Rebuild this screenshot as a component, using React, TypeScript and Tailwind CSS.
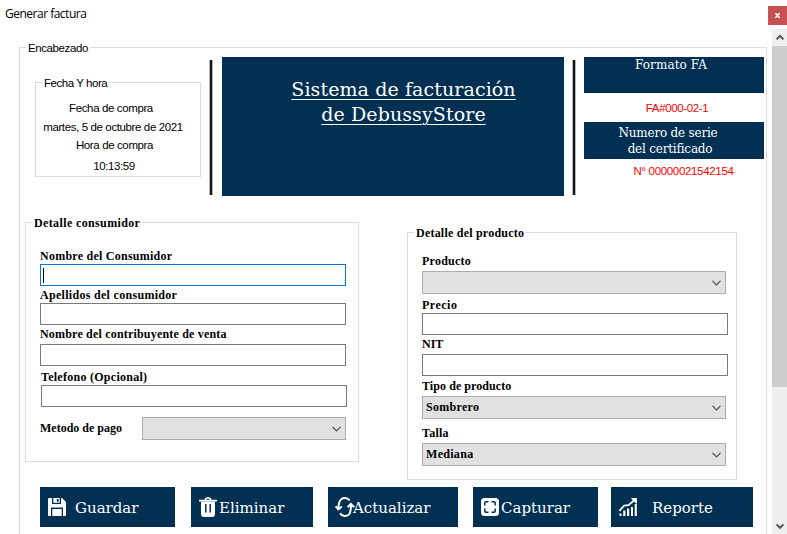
import type { ReactNode } from "react";

const sans = "font-['Liberation_Sans',Arial,sans-serif]";
const serif = "font-['Liberation_Serif','Times_New_Roman',serif]";
const display = "font-['DejaVu_Serif',serif]";

function GroupBox({ title, className, legendClass, children }: { title: string; className: string; legendClass: string; children: ReactNode }) {
  return (
    <fieldset className={`shrink-0 min-w-0 border border-[#dcdcdc] ${className}`}>
      <legend className={`ml-[6px] h-[13px] whitespace-nowrap pl-[2px] leading-[15px] ${legendClass}`}>{title}</legend>
      {children}
    </fieldset>
  );
}

function Label({ className, children }: { className: string; children: ReactNode }) {
  return <div className={`h-[15px] whitespace-nowrap leading-[15px] ${className}`}>{children}</div>;
}

function TextBox({ className = "", focused = false }: { className?: string; focused?: boolean }) {
  return (
    <div className={`flex h-[22px] w-[306px] items-center border bg-white pl-[2px] ${focused ? "border-[#0078d7]" : "border-[#7a7a7a]"} ${className}`}>
      {focused && <span className="h-[15px] w-px bg-black" />}
    </div>
  );
}

function Combo({ className, value = "" }: { className: string; value?: string }) {
  return (
    <div className={`flex h-[23px] items-center justify-between border border-[#adadad] bg-[#e1e1e1] pl-[3px] pr-[4px] ${className}`}>
      <span className="leading-[15px] tracking-[0.3px]">{value}</span>
      <svg width="9" height="6" viewBox="0 0 9 6" fill="none" stroke="#4d4d4d" strokeWidth="1.2">
        <path d="M0.5 0.8 4.5 4.8 8.5 0.8" />
      </svg>
    </div>
  );
}

function Divider({ className }: { className: string }) {
  return <div className={`h-[135px] w-[4px] border-x border-l-[#b8b8b8] border-r-[#b8b8b8] bg-[#141414] ${className}`} />;
}

function ActionButton({ className, icon, label, labelClass }: { className: string; icon: ReactNode; label: string; labelClass: string }) {
  return (
    <div className={`flex h-10 shrink-0 items-center bg-[#023052] text-white ${className}`}>
      {icon}
      <span className={`whitespace-nowrap pt-px text-[15px] leading-5 ${labelClass}`}>{label}</span>
    </div>
  );
}

const SaveIcon = () => (
  <svg className="shrink-0" width="18" height="18" viewBox="0 0 18 18" fill="#fff">
    <path d="M1 0H4V6H13V0H14L18 4V17Q18 18 17 18H15V9.5H3V18H1Q0 18 0 17V1Q0 0 1 0Z" />
    <path d="M5.3 0H11.7V4.8H5.3Z" />
    <path d="M8.8 1H10.6V3.8H8.8Z" fill="#023052" />
    <path d="M4.3 11H13.7V18H4.3Z" />
  </svg>
);

const TrashIcon = () => (
  <svg className="shrink-0" width="18" height="20" viewBox="0 0 18 20" fill="#fff">
    <path d="M0 2.7H5.5Q6 0 9 0T12.5 2.7H18V4.6H0ZM7.2 2.7H10.8Q10.4 1.5 9 1.5T7.2 2.7Z" fillRule="evenodd" />
    <path d="M2 4.4H16V17Q16 20 13 20H5Q2 20 2 17ZM6 7V15.6H7.5V7ZM10.5 7V15.6H12V7Z" fillRule="evenodd" />
  </svg>
);

const RefreshIcon = () => (
  <svg className="shrink-0" width="20" height="20" viewBox="0 0 20 20" fill="none" stroke="#fff" strokeWidth="2">
    <path d="M14.6 3.4C12 0.2 8 0.3 5.8 2.6C3.6 4.8 3.4 7 3.4 12" />
    <path d="M0.6 9.3 3.4 12.4 6.8 9.6" />
    <path d="M5 16.3C7.4 19.7 11.8 19.7 14 17.4C16 15.2 16 13 16 7.5" />
    <path d="M12.6 10.2 15.9 7 19.2 10.2" />
  </svg>
);

const CaptureIcon = () => (
  <svg className="shrink-0" width="18" height="18" viewBox="0 0 18 18">
    <rect width="18" height="18" rx="3.5" fill="#fff" />
    <path d="M3.8 7.5V5Q3.8 3.8 5 3.8H7.5M10.5 3.8H13Q14.2 3.8 14.2 5V7.5M14.2 10.5V13Q14.2 14.2 13 14.2H10.5M7.5 14.2H5Q3.8 14.2 3.8 13V10.5" fill="none" stroke="#023052" strokeWidth="1.5" />
  </svg>
);

const ReportIcon = () => (
  <svg className="shrink-0" width="18" height="18" viewBox="0 0 18 18" fill="#fff">
    <path d="M0.5 15.5H2.5V18H0.5ZM4.2 12.5H6.4V18H4.2ZM8 10.5H10.2V18H8ZM12 9H14V18H12ZM15.7 6H17.8V18H15.7Z" />
    <path d="M0.3 13 5.2 7.5 9.5 7.2 15.8 1.8" fill="none" stroke="#fff" strokeWidth="1.8" />
    <path d="M12 0H18V6L16 4.5 13.5 2Z" />
  </svg>
);

function ScrollArrow({ up = false }: { up?: boolean }) {
  return (
    <svg width="8" height="7" viewBox="0 0 8 7" fill="none" stroke="#555" strokeWidth="2">
      <path d={up ? "M0.6 5.3 4 1.9 7.4 5.3" : "M0.6 1.4 4 4.8 7.4 1.4"} />
    </svg>
  );
}

export default function App() {
  return (
    <div className={`flex h-[534px] w-[787px] flex-col overflow-hidden bg-white text-black ${sans}`}>
      <header className="flex h-[29px] shrink-0 items-start justify-between">
        <h1 className="ml-[5px] mt-[6px] whitespace-nowrap font-['Open_Sans',sans-serif] text-[12px] leading-4 tracking-[-0.5px]">Generar factura</h1>
        <button className="mt-[6px] flex h-[19px] w-[19px] items-center justify-center bg-[#c75050]">
          <svg width="5" height="5" viewBox="0 0 5 5" stroke="#fff" strokeWidth="1.6"><path d="M0.3 0 4.7 5M4.7 0 0.3 5" /></svg>
        </button>
      </header>

      <div className="flex min-h-0 flex-1">
        <main className="w-[772px] pl-[19px] pt-[12px]">
          <GroupBox title="Encabezado" className="h-[520px] w-[748px]" legendClass="w-[64px] text-[11.5px] tracking-[-0.4px]">
            <section className="flex h-[162px] items-start text-[11.5px] tracking-[-0.38px]">
              <GroupBox title="Fecha Y hora" className="ml-[15px] mt-[22px] h-[101px] w-[166px]" legendClass="w-[67px] tracking-[-0.45px]">
                <div className="flex flex-col pt-[12px] text-center">
                  <Label className="mr-[14px]">Fecha de compra</Label>
                  <Label className="mr-[10px] mt-[4px]">martes, 5 de octubre de 2021</Label>
                  <Label className="mr-[7px] mt-[3px]">Hora de compra</Label>
                  <Label className="mr-[8px] mt-[6px]">10:13:59</Label>
                </div>
              </GroupBox>
              <Divider className="ml-[8px] mt-[6px]" />
              <div className={`ml-[9px] mt-[3px] h-[139px] w-[342px] bg-[#023052] pt-[20px] text-center text-[19px] leading-[25px] tracking-[0.1px] text-white ${display}`}>
                <h2 className="ml-[21px] whitespace-nowrap underline decoration-1 underline-offset-[3px]">
                  Sistema de facturación<br />de DebussyStore
                </h2>
              </div>
              <Divider className="ml-[8px] mt-[6px]" />
              <div className="ml-[8px] mt-[3px] w-[180px] text-center">
                <div className={`h-[36px] bg-[#023052] pr-[6px] text-[12px] leading-[17px] tracking-[0.1px] text-white ${display}`}>Formato FA</div>
                <Label className="ml-[6px] mt-[8px] text-[#ff0000]">FA#000-02-1</Label>
                <div className={`mt-[6px] h-[37px] bg-[#023052] pr-[12px] pt-[3px] text-[12px] leading-4 tracking-[-0.2px] text-white ${display}`}>
                  Numero de serie<br /><span className="ml-[4px]">del certificado</span>
                </div>
                <Label className="ml-[19px] mt-[5px] tracking-[-0.33px] text-[#ff0000]">N° 00000021542154</Label>
              </div>
            </section>

            <section className={`flex h-[271px] items-start text-[12px] font-bold ${serif}`}>
              <GroupBox title="Detalle consumidor" className="ml-[5px] h-[246px] w-[334px]" legendClass="w-[110px] tracking-[0.37px]">
                <div className="pl-[14px] pt-[20px]">
                  <Label className="tracking-[0.25px]">Nombre del Consumidor</Label>
                  <TextBox focused />
                  <Label className="mt-[2px] tracking-[0.3px]">Apellidos del consumidor</Label>
                  <TextBox />
                  <Label className="mt-[2px] tracking-[0.19px]">Nombre del contribuyente de venta</Label>
                  <TextBox className="mt-[2px]" />
                  <Label className="ml-px mt-[4px] tracking-[0.27px]">Telefono (Opcional)</Label>
                  <TextBox className="ml-px" />
                  <div className="mt-[10px] flex w-[306px] items-center justify-between">
                    <Label className="">Metodo de pago</Label>
                    <Combo className="w-[204px]" />
                  </div>
                </div>
              </GroupBox>
              <GroupBox title="Detalle del producto" className="ml-[48px] mt-[10px] h-[254px] w-[330px]" legendClass="w-[112px] tracking-[0.22px]">
                <div className="pl-[14px] pt-[15px]">
                  <Label className="tracking-[0.25px]">Producto</Label>
                  <Combo className="mt-[2px] w-[304px]" />
                  <Label className="mt-[4px] tracking-[0.5px]">Precio</Label>
                  <TextBox />
                  <Label className="mt-[2px]">NIT</Label>
                  <TextBox className="mt-[2px]" />
                  <Label className="mt-[3px] tracking-[0.07px]">Tipo de producto</Label>
                  <Combo className="mt-[2px] w-[304px]" value="Sombrero" />
                  <Label className="mt-[7px] tracking-[0.25px]">Talla</Label>
                  <Combo className="mt-[2px] w-[304px]" value="Mediana" />
                </div>
              </GroupBox>
            </section>

            <nav className={`ml-[20px] flex ${display}`}>
              <ActionButton className="w-[135px] pl-[8px]" icon={<SaveIcon />} label="Guardar" labelClass="ml-[9px]" />
              <ActionButton className="ml-[16px] w-[122px] pl-[8px]" icon={<TrashIcon />} label="Eliminar" labelClass="ml-[2px]" />
              <ActionButton className="ml-[15px] w-[130px] pl-[7px]" icon={<RefreshIcon />} label="Actualizar" labelClass="ml-[-2px]" />
              <ActionButton className="ml-[15px] w-[125px] pl-[8px]" icon={<CaptureIcon />} label="Capturar" labelClass="ml-[2px]" />
              <ActionButton className="ml-[13px] w-[142px] pl-[8px]" icon={<ReportIcon />} label="Reporte" labelClass="ml-[15px]" />
            </nav>
          </GroupBox>
        </main>

        <aside className="flex w-[15px] flex-col items-center bg-[#efefef]">
          <div className="flex h-[17px] items-center"><ScrollArrow up /></div>
          <div className="h-[341px] w-full bg-[#cdcdcd]" />
          <div className="mt-auto flex h-[15px] items-center"><ScrollArrow /></div>
        </aside>
      </div>
    </div>
  );
}
